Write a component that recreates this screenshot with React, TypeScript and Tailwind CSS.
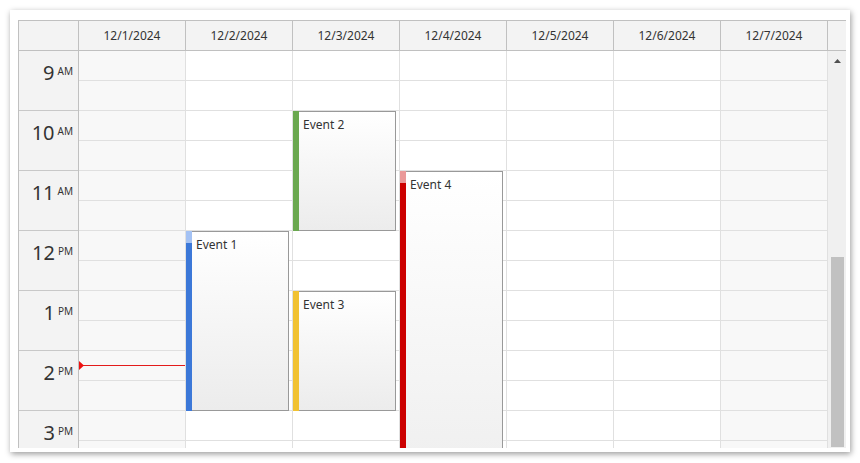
import React from "react"

const days = [
  { label: "12/1/2024", weekend: true },
  { label: "12/2/2024", weekend: false },
  { label: "12/3/2024", weekend: false },
  { label: "12/4/2024", weekend: false },
  { label: "12/5/2024", weekend: false },
  { label: "12/6/2024", weekend: false },
  { label: "12/7/2024", weekend: true },
]

const hours = [
  { h: "9", ap: "AM" },
  { h: "10", ap: "AM" },
  { h: "11", ap: "AM" },
  { h: "12", ap: "PM" },
  { h: "1", ap: "PM" },
  { h: "2", ap: "PM" },
  { h: "3", ap: "PM" },
]

type Ev = { day: number; text: string; top: number; height: number; bar: string; light: string; partial?: boolean }

// top/height in px, 1 hour = 60px, 9 AM = 0
const events: Ev[] = [
  { day: 1, text: "Event 1", top: 180, height: 180, bar: "bg-[#3c78d8]", light: "bg-[#a4c2f4]", partial: true },
  { day: 2, text: "Event 2", top: 60, height: 120, bar: "bg-[#6aa84f]", light: "bg-[#6aa84f]" },
  { day: 2, text: "Event 3", top: 240, height: 120, bar: "bg-[#f1c232]", light: "bg-[#f1c232]" },
  { day: 3, text: "Event 4", top: 120, height: 360, bar: "bg-[#cc0000]", light: "bg-[#ea9999]", partial: true },
]

function EventBox({ ev }: { ev: Ev }) {
  return (
    <div
      className="absolute left-0 w-[103px] flex z-10"
      style={{ top: ev.top, height: ev.height }}
    >
      <div className="w-[6px] flex flex-col shrink-0">
        {ev.partial && <div className={`h-[12px] ${ev.light}`} />}
        <div className={`flex-1 ${ev.bar}`} />
      </div>
      <div className="flex-1 border-t border-r border-b border-[#999999] bg-gradient-to-b from-white to-[#ececec] pl-[4px] pt-[5px] text-[12px] leading-[16px] text-[#333333]">
        {ev.text}
      </div>
    </div>
  )
}

export default function App() {
  return (
    <div className="w-[860px] h-[463px] bg-white pt-[10px] pl-[10px] font-['Noto_Sans',sans-serif]">
      <div className="w-[840px] h-[442px] bg-white shadow-[1px_2px_6px_rgba(0,0,0,0.4)] pl-[8px] pt-[10px]">
        {/* header */}
        <div className="flex h-[31px]">
          <div className="w-[61px] border border-[#c0c0c0] bg-[#f3f3f3]" />
          {days.map((d) => (
            <div
              key={d.label}
              className="w-[107px] border-t border-r border-b border-[#c0c0c0] bg-[#f3f3f3] flex items-center justify-center text-[12px] text-[#333333]"
            >
              {d.label}
            </div>
          ))}
          <div className="w-[18px] border-t border-b border-[#c0c0c0] bg-[#f3f3f3]" />
        </div>

        {/* body */}
        <div className="flex h-[397px] overflow-hidden">
          <div className="w-[61px] shrink-0 border-l border-r border-[#c0c0c0] bg-[#f3f3f3]">
            {hours.map((t) => (
              <div
                key={t.h + t.ap}
                className="h-[60px] border-b border-[#c8c8c8] flex justify-end items-start pr-[5px] pt-[12px] text-[#333333]"
              >
                <span className="text-[20px] leading-[20px]">{t.h}</span>
                <span className="text-[10px] leading-[10px] ml-[3px] mt-[3px]">{t.ap}</span>
              </div>
            ))}
          </div>

          {days.map((d, i) => (
            <div
              key={d.label}
              className={`relative w-[107px] shrink-0 border-r border-[#e0e0e0] ${d.weekend ? "bg-[#f8f8f8]" : "bg-white"}`}
            >
              {Array.from({ length: 14 }).map((_, j) => (
                <div key={j} className="h-[30px] border-b border-[#e0e0e0]" />
              ))}
              {events
                .filter((e) => e.day === i)
                .map((e) => (
                  <EventBox key={e.text} ev={e} />
                ))}
              {i === 0 && (
                <div className="absolute left-0 right-0 top-[314px] h-[1px] bg-[#e31b1b]">
                  <svg className="absolute left-0 top-[-4px]" width="5" height="9" viewBox="0 0 5 9">
                    <polygon points="0,0 5,4.5 0,9" fill="#ee1111" />
                  </svg>
                </div>
              )}
            </div>
          ))}

          {/* scrollbar */}
          <div className="w-[18px] shrink-0 bg-[#f0f0f0] flex flex-col items-center">
            <div className="h-[15px] w-full flex items-center justify-center pt-[4px]">
              <svg width="7" height="4" viewBox="0 0 7 4">
                <polygon points="0,4 3.5,0 7,4" fill="#505050" />
              </svg>
            </div>
            <div className="flex-1" />
            <div className="w-[13px] h-[190px] bg-[#c1c1c1] mb-[1px]" />
          </div>
        </div>
      </div>
    </div>
  )
}
